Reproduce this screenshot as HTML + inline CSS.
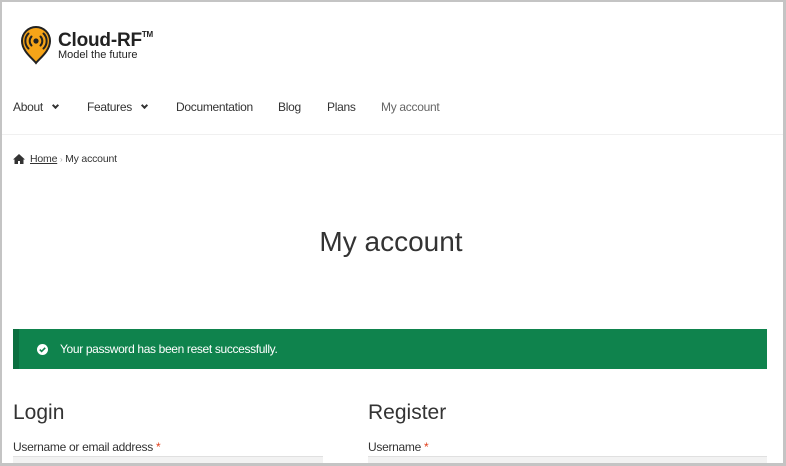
<!DOCTYPE html>
<html><head><meta charset="utf-8"><style>
*{margin:0;padding:0;box-sizing:border-box}
body{width:786px;height:466px;overflow:hidden;background:#fff;font-family:"Liberation Sans",Arial,sans-serif;position:relative;color:#333}
.frame{position:absolute;left:0;top:0;width:786px;height:466px;border:2px solid #c4c4c4;border-right-width:3px;border-bottom-width:3px}
.a{position:absolute;white-space:nowrap}
.nav{font-size:12px;letter-spacing:-0.3px;color:#333;top:100px}
.chev{display:inline-block;width:5px;height:5px;border-right:2px solid #333;border-bottom:2px solid #333;transform:rotate(45deg);position:relative;top:-3px;margin-left:10px}
</style></head><body>
<svg class="a" style="left:19px;top:25px" width="34" height="40" viewBox="0 0 32 40">
<path d="M16 38 C12 33 2 26 2 16 A14 14 0 0 1 30 16 C30 26 20 33 16 38Z" fill="#f6a418" stroke="#222" stroke-width="2"/>
<circle cx="16" cy="16" r="2.6" fill="#222"/>
<path d="M11.5 11.5a6.5 6.5 0 0 0 0 9M20.5 11.5a6.5 6.5 0 0 1 0 9M8.5 8.5a10.5 10.5 0 0 0 0 15M23.5 8.5a10.5 10.5 0 0 1 0 15" fill="none" stroke="#222" stroke-width="2" stroke-linecap="round"/>
</svg>
<div class="a" style="left:58px;top:30px;font-size:19px;font-weight:bold;color:#222;letter-spacing:-0.2px">Cloud-RF<span style="font-size:8px;vertical-align:9px">TM</span></div>
<div class="a" style="left:58px;top:49px;font-size:11px;color:#222">Model the future</div>
<div class="a nav" style="left:13px">About<span class="chev"></span></div>
<div class="a nav" style="left:87px">Features<span class="chev"></span></div>
<div class="a nav" style="left:176px">Documentation</div>
<div class="a nav" style="left:278px">Blog</div>
<div class="a nav" style="left:327px">Plans</div>
<div class="a nav" style="left:381px;color:#666">My account</div>
<div class="a" style="left:2px;top:134px;width:781px;height:1px;background:#f0f0f0"></div>
<svg class="a" style="left:13px;top:154px" width="12" height="10" viewBox="0 0 12 10"><path d="M6 0L0 5.5h1.5V10h3.5V7h2v3h3.5V5.5H12z" fill="#333"/></svg>
<div class="a" style="left:30px;top:153px;font-size:10.5px;letter-spacing:-0.2px;color:#333"><span style="text-decoration:underline">Home</span> <span style="color:#aaa;font-size:8px">›</span> My account</div>
<div class="a" style="left:-2px;width:786px;text-align:center;top:226px;font-size:28px;color:#333">My account</div>
<div class="a" style="left:13px;top:329px;width:754px;height:40px;background:#0f834d;border-left:6px solid #0b6f40"></div>
<svg class="a" style="left:37px;top:344px" width="11" height="11" viewBox="0 0 11 11"><circle cx="5.5" cy="5.5" r="5.5" fill="#fff"/><path d="M2.8 5.6l1.8 1.8 3.6-3.6" fill="none" stroke="#0f834d" stroke-width="1.6"/></svg>
<div class="a" style="left:60px;top:342px;font-size:12px;letter-spacing:-0.35px;color:#fff">Your password has been reset successfully.</div>
<div class="a" style="left:13px;top:401px;font-size:21px;color:#333">Login</div>
<div class="a" style="left:368px;top:401px;font-size:21px;color:#333">Register</div>
<div class="a" style="left:13px;top:440px;font-size:12px;letter-spacing:-0.3px;color:#333">Username or email address <span style="color:#e2401c">*</span></div>
<div class="a" style="left:368px;top:440px;font-size:12px;letter-spacing:-0.3px;color:#333">Username <span style="color:#e2401c">*</span></div>
<div class="a" style="left:13px;top:456px;width:310px;height:10px;background:#f2f2f2;border-top:1px solid #e0e0e0"></div>
<div class="a" style="left:368px;top:456px;width:399px;height:10px;background:#f2f2f2;border-top:1px solid #e0e0e0"></div>
<div class="frame"></div>
</body></html>
